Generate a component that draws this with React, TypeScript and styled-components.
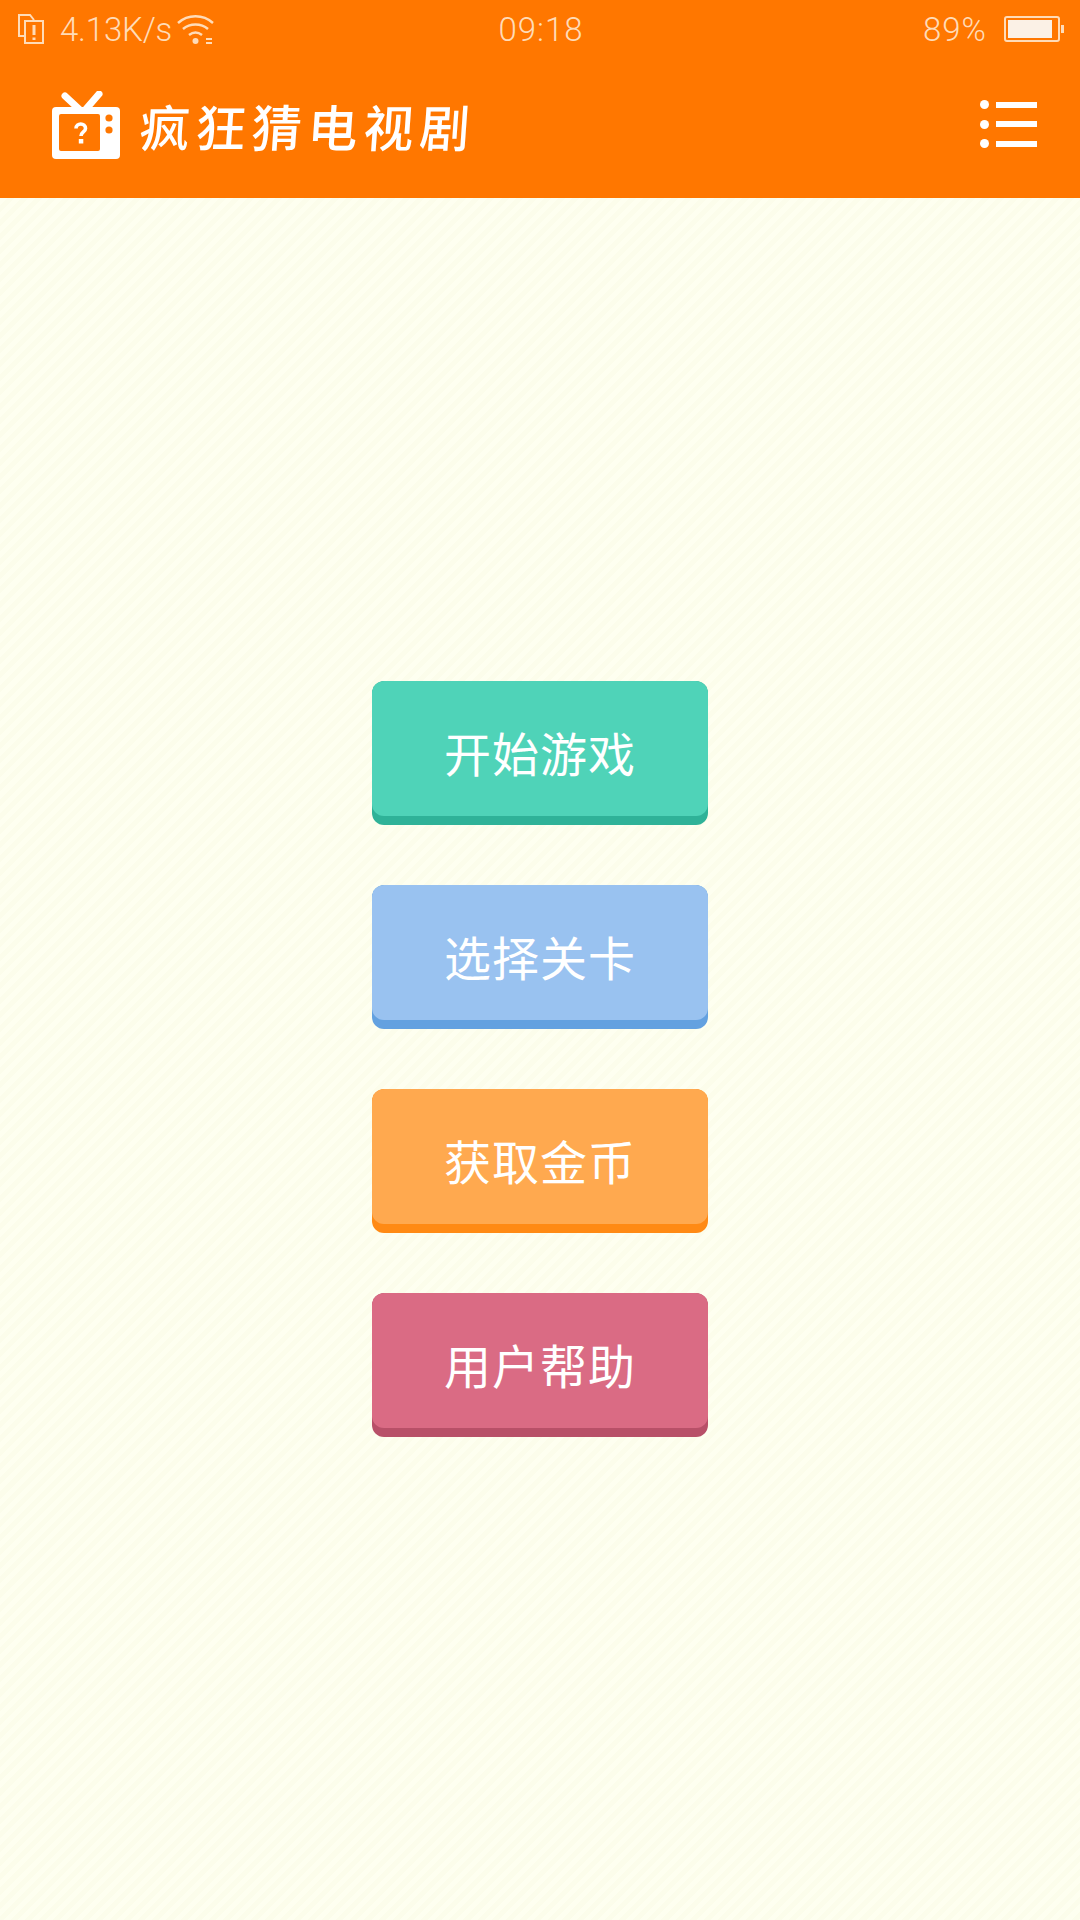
import React from 'react'
import styled, { createGlobalStyle } from 'styled-components'

const GlobalStyle = createGlobalStyle`
  html, body {
    margin: 0;
    padding: 0;
  }
  body {
    font-family: 'Noto Sans CJK SC', Roboto, sans-serif;
  }
`

const Page = styled.div`
  width: 1080px;
  height: 1920px;
  display: flex;
  flex-direction: column;
  overflow: hidden;
  background-color: #fefff0;
  background-image: repeating-linear-gradient(
    135deg,
    #fefff0 0,
    #fefff0 5px,
    #fcfdeb 5px,
    #fcfdeb 10px
  );
`

const Header = styled.header`
  height: 198px;
  background: #ff7700;
  display: flex;
  flex-direction: column;
`

const StatusBar = styled.div`
  height: 54px;
  padding: 4px 16px 0 18px;
  box-sizing: border-box;
  display: grid;
  grid-template-columns: 1fr auto 1fr;
  align-items: center;
  font-family: Roboto, sans-serif;
  font-weight: 300;
  font-size: 33px;
  color: #ffdcb8;
`

const StatusLeft = styled.div`
  display: flex;
  align-items: center;
`

const StatusRight = styled.div`
  display: flex;
  align-items: center;
  justify-content: flex-end;
`

const Speed = styled.span`
  margin-left: 16px;
  margin-right: 5px;
  letter-spacing: -0.2px;
`

const Clock = styled.span`
  letter-spacing: 1px;
`

const Percent = styled.span`
  margin-right: 17px;
  letter-spacing: 1px;
`

const TitleBar = styled.div`
  flex: 1;
  display: flex;
  align-items: center;
  justify-content: space-between;
  padding: 0 43px 4px 52px;
`

const Brand = styled.div`
  display: flex;
  align-items: center;
  padding-top: 2px;
`

const Title = styled.h1`
  margin: 0 0 0 20px;
  font-size: 50px;
  line-height: 60px;
  font-weight: 500;
  letter-spacing: 6px;
  color: #fff;
  transform: skewX(-4deg);
`

const Menu = styled.div`
  display: flex;
  flex-direction: column;
  gap: 10.5px;
`

const MenuRow = styled.div`
  display: flex;
  align-items: center;
  gap: 7px;
`

const MenuDot = styled.span`
  width: 9px;
  height: 9px;
  border-radius: 50%;
  background: #fff;
`

const MenuLine = styled.span`
  width: 41px;
  height: 6px;
  background: #fff;
`

const Buttons = styled.main`
  flex: 1;
  display: flex;
  flex-direction: column;
  align-items: center;
  gap: 60px;
  padding-top: 483px;
`

const GameButton = styled.div<{ $shade: string; $face: string }>`
  width: 336px;
  height: 144px;
  border-radius: 12px;
  background: ${p => p.$shade};
  overflow: hidden;
  flex-shrink: 0;
  > div {
    background: ${p => p.$face};
  }
`

const ButtonFace = styled.div`
  height: 135px;
  border-radius: 12px;
  padding-top: 5px;
  box-sizing: border-box;
  display: flex;
  align-items: center;
  justify-content: center;
  font-size: 47px;
  font-weight: 400;
  letter-spacing: 1px;
  color: #fff;
`

const menuItems = [
  { label: '开始游戏', face: '#4fd3b8', shade: '#2fb298' },
  { label: '选择关卡', face: '#99c2f0', shade: '#63a1e0' },
  { label: '获取金币', face: '#ffa94f', shade: '#ff8a14' },
  { label: '用户帮助', face: '#da6b84', shade: '#b85068' },
]

const SimIcon = () => (
  <svg width="26" height="30" viewBox="0 0 26 30" fill="none" stroke="#ffdcb8" strokeWidth="2">
    <path d="M7 22H1V1h11l4 5" />
    <path d="M7 7h18v22H7z" fill="#ff7700" />
    <path d="M16 11v10M16 23.5v2.500" strokeWidth="3" />
  </svg>
)

const WifiIcon = () => (
  <svg width="37" height="29" viewBox="0 0 37 29" fill="none" stroke="#ffdcb8" strokeWidth="2.500">
    <path d="M1 8C11-1 26-1 36 8" />
    <path d="M6 14c7-6 18-6 25 0" />
    <path d="M12 20c4-3 9-3 13 0" />
    <circle cx="18.500" cy="26" r="3" fill="#ffdcb8" stroke="none" />
    <path d="M29 24h6M29 28h6" strokeWidth="2" />
  </svg>
)

const BatteryIcon = () => (
  <svg width="60" height="26" viewBox="0 0 60 26" fill="none">
    <rect x="1" y="1" width="54" height="24" rx="2" stroke="#ffdcb8" strokeWidth="2" />
    <rect x="4" y="4" width="44" height="18" fill="#fbf1e6" />
    <rect x="57" y="9" width="3" height="8" fill="#ffdcb8" />
  </svg>
)

const TvIcon = () => (
  <svg width="68" height="68" viewBox="0 0 68 68" fill="none">
    <path d="M13 5l14 13M47 3L34 18" stroke="#fff" strokeWidth="7" strokeLinecap="round" />
    <rect x="0" y="16" width="68" height="52" rx="4" fill="#fff" />
    <rect x="7" y="23" width="41" height="37" rx="2" fill="#ff7700" />
    <circle cx="57" cy="27" r="3.600" fill="#ff7700" />
    <circle cx="57" cy="39" r="3.600" fill="#ff7700" />
    <path d="M24 37.500c0-6 9.500-6 9.500 0 0 3.500-4.500 3.500-4.500 7.500" stroke="#fff" strokeWidth="3.600" />
    <rect x="26.800" y="48" width="4.500" height="4.500" fill="#fff" />
  </svg>
)

const App = () => {
  return (
    <Page>
      <GlobalStyle />
      <Header>
        <StatusBar>
          <StatusLeft>
            <SimIcon />
            <Speed>4.13K/s</Speed>
            <WifiIcon />
          </StatusLeft>
          <Clock>09:18</Clock>
          <StatusRight>
            <Percent>89%</Percent>
            <BatteryIcon />
          </StatusRight>
        </StatusBar>
        <TitleBar>
          <Brand>
            <TvIcon />
            <Title>疯狂猜电视剧</Title>
          </Brand>
          <Menu>
            {[0, 1, 2].map(i => (
              <MenuRow key={i}>
                <MenuDot />
                <MenuLine />
              </MenuRow>
            ))}
          </Menu>
        </TitleBar>
      </Header>
      <Buttons>
        {menuItems.map(item => (
          <GameButton key={item.label} $face={item.face} $shade={item.shade}>
            <ButtonFace>{item.label}</ButtonFace>
          </GameButton>
        ))}
      </Buttons>
    </Page>
  )
}

export default App
